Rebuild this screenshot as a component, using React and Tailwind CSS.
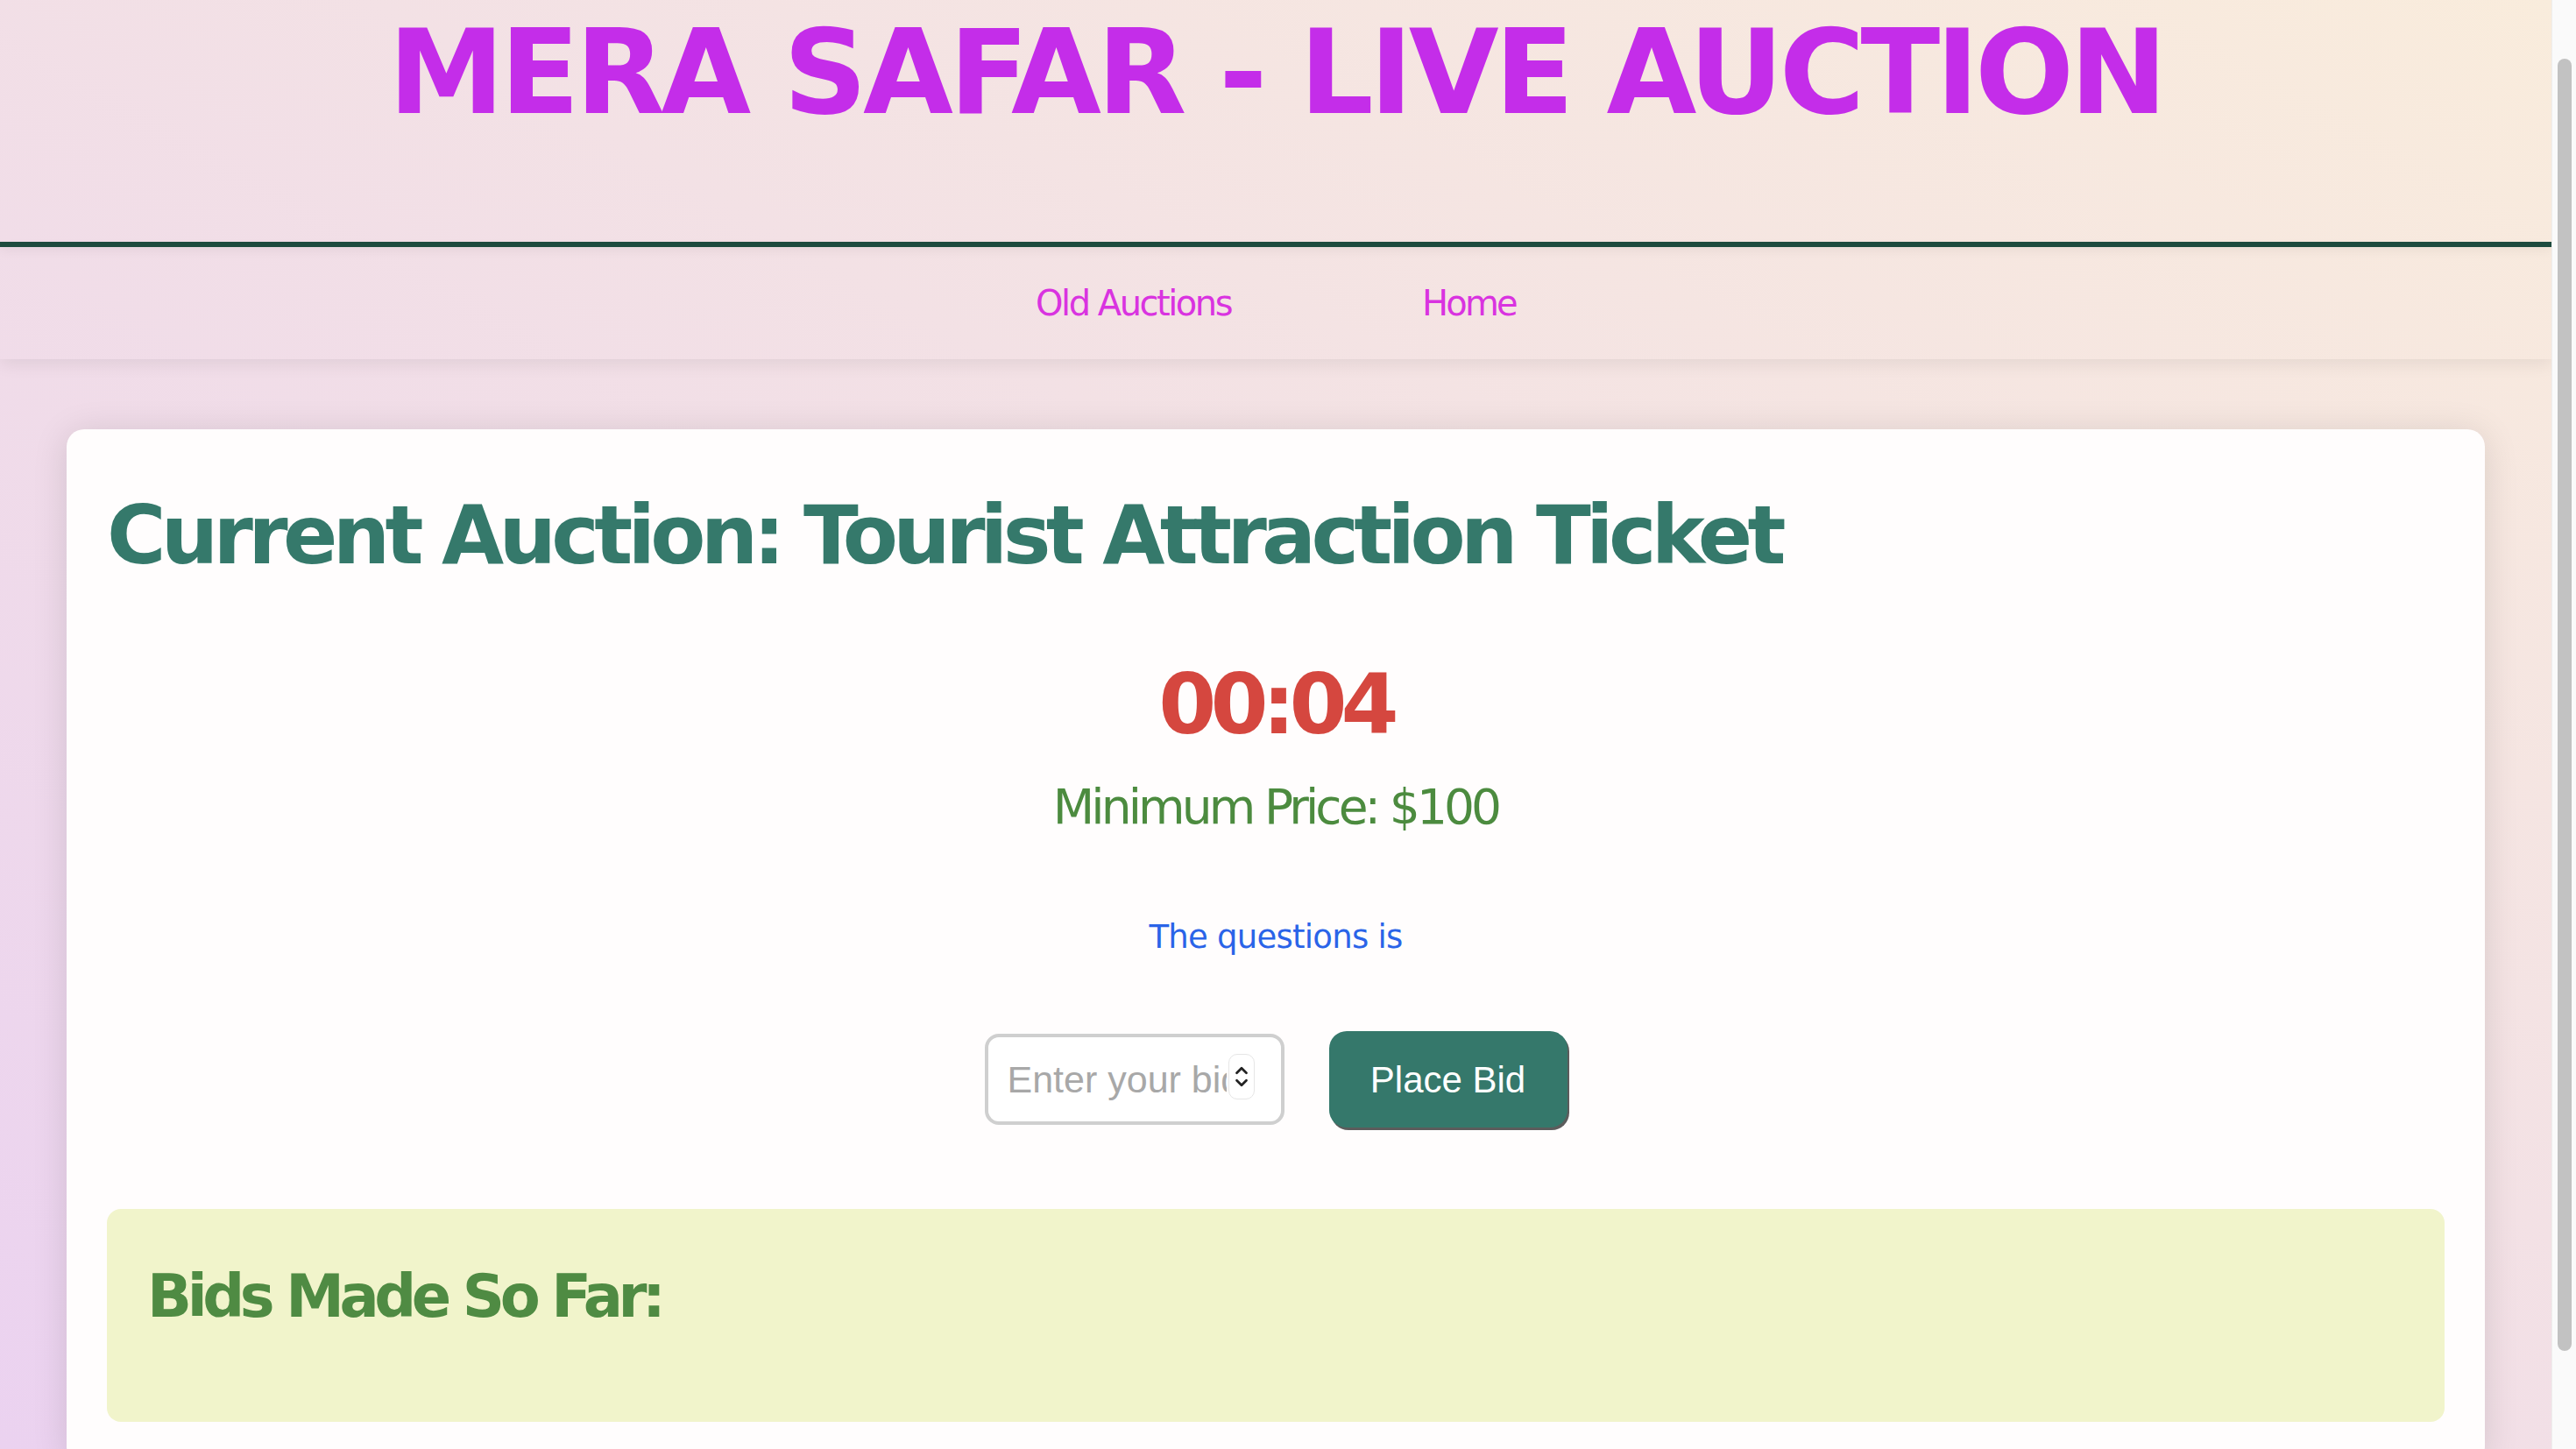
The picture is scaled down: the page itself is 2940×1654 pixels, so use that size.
import React from "react";
import { ChevronUp, ChevronDown } from "lucide-react";

const AuctionHeader = () => (
  <>
    <header className="relative z-10 h-[282px] border-b-[6px] border-[#1d4b3e] pt-[17px] shadow-[0_4px_12px_rgba(0,0,0,0.05)]">
      <h1 className="text-center text-[133px] leading-none font-bold tracking-[-4.8px] text-[#c42de9]">
        MERA SAFAR - LIVE AUCTION
      </h1>
    </header>
    <nav className="h-[128px] flex items-center justify-center gap-[218px] shadow-[0_6px_18px_rgba(0,0,0,0.07)]">
      <a className="text-[40px] leading-none tracking-[-2.5px] text-[#d933e0]">Old Auctions</a>
      <a className="text-[40px] leading-none tracking-[-2.8px] text-[#d933e0]">Home</a>
    </nav>
  </>
);

const BidForm = () => (
  <div className="mt-[89px] flex items-center justify-center gap-[51px]">
    <div className="relative">
      <input
        type="text"
        placeholder="Enter your bid"
        className="w-[342px] h-[104px] rounded-[16px] border-4 border-[#cfcfcf] bg-white pl-[22px] pr-[62px] text-[43px] font-['Liberation_Sans',sans-serif] text-[#333] placeholder:text-[#a8a8a8] outline-none"
      />
      {/* fake number spinner */}
      <div className="absolute right-[34px] top-[23px] w-[30px] h-[52px] rounded-[10px] border border-[#e6e6e6] bg-white flex flex-col items-center justify-center">
        <ChevronUp size={22} strokeWidth={3} className="text-[#222] -mb-[4px]" />
        <ChevronDown size={22} strokeWidth={3} className="text-[#222] -mt-[4px]" />
      </div>
    </div>
    <button className="w-[272px] h-[110px] rounded-[20px] bg-[#35786b] text-white text-[42px] font-['Liberation_Sans',sans-serif] shadow-[2px_3px_0_#5c5c5c]">
      Place Bid
    </button>
  </div>
);

export default function App() {
  return (
    <div className="flex h-screen overflow-hidden font-['DejaVu_Sans',sans-serif]">
      <div className="flex-1 min-w-0 overflow-hidden bg-linear-to-tr from-[#ebd2f0] to-[#f9ecdc]">
        <AuctionHeader />

        <main className="pt-[80px] px-[76px]">
          <section className="rounded-[20px] bg-[#fffdfd] pt-[76px] px-[46px] pb-[48px] shadow-[0_4px_40px_rgba(0,0,0,0.12)]">
            <h2 className="text-[92px] leading-none font-bold tracking-[-5.7px] text-[#35796b]">
              Current Auction: Tourist Attraction Ticket
            </h2>

            <div className="mt-[99px] text-center text-[95px] leading-none font-bold tracking-[-7px] text-[#d5473f]">
              00:04
            </div>
            <p className="mt-[42px] text-center text-[55px] leading-none tracking-[-3.9px] text-[#4c8b3f]">
              Minimum Price: $100
            </p>
            <p className="mt-[102px] text-center text-[37px] leading-none tracking-[-0.75px] text-[#2a64e8]">
              The questions is
            </p>

            <BidForm />

            <div className="mt-[93px] h-[243px] rounded-[16px] bg-[#f1f4cb] pt-[67px] px-[46px]">
              <h3 className="text-[67px] leading-none font-bold tracking-[-5.4px] text-[#4f8b43]">
                Bids Made So Far:
              </h3>
            </div>
          </section>
        </main>
      </div>

      {/* scrollbar */}
      <div className="w-[28px] shrink-0 bg-[#fafafa] border-l border-[#ededed] pt-[67px]">
        <div className="mx-auto w-[16px] h-[1475px] rounded-full bg-[#c2c2c2]" />
      </div>
    </div>
  );
}
